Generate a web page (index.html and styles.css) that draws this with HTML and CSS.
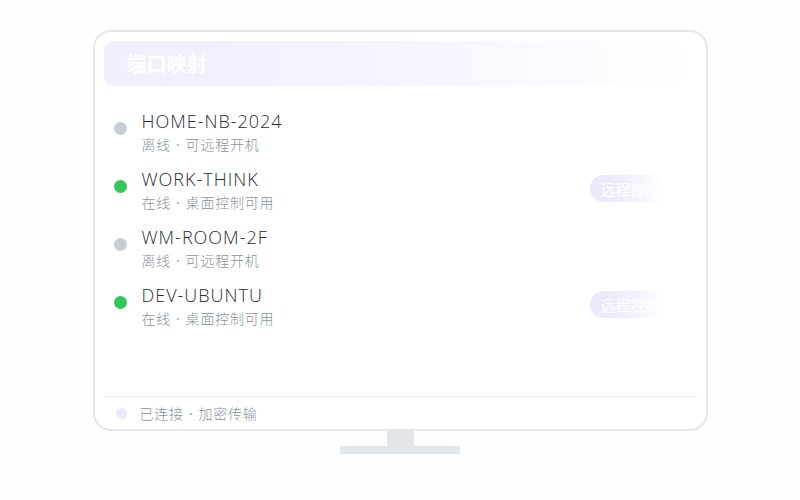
FILE: index.html
```html
<!DOCTYPE html>
<html lang="zh-CN">
<head>
<meta charset="utf-8">
<title>端口映射</title>
<link rel="stylesheet" href="styles.css">
</head>
<body>
<div class="stage">
  <div class="monitor">
    <div class="header"><span class="title">端口映射</span></div>
    <div class="list">
      <div class="row">
        <span class="dot off"></span>
        <div class="info">
          <div class="name">HOME-NB-2024</div>
          <div class="sub">离线<span class="sep">·</span>可远程开机</div>
        </div>
      </div>
      <div class="row">
        <span class="dot on"></span>
        <div class="info">
          <div class="name">WORK-THINK</div>
          <div class="sub">在线<span class="sep">·</span>桌面控制可用</div>
        </div>
        <span class="btn">远程控制</span>
      </div>
      <div class="row">
        <span class="dot off"></span>
        <div class="info">
          <div class="name">WM-ROOM-2F</div>
          <div class="sub">离线<span class="sep">·</span>可远程开机</div>
        </div>
      </div>
      <div class="row">
        <span class="dot on"></span>
        <div class="info">
          <div class="name">DEV-UBUNTU</div>
          <div class="sub">在线<span class="sep">·</span>桌面控制可用</div>
        </div>
        <span class="btn">远程控制</span>
      </div>
    </div>
    <div class="footer">
      <span class="fdot"></span>
      <span class="ftext">已连接<span class="sep">·</span>加密传输</span>
    </div>
  </div>
  <div class="neck"></div>
  <div class="base"></div>
</div>
</body>
</html>
```

FILE: styles.css
```css
html, body {
  margin: 0;
  padding: 0;
  background: #fefefe;
}
body {
  font-family: "Open Sans", "Noto Sans CJK SC", sans-serif;
  width: 800px;
  height: 500px;
  overflow: hidden;
}
.stage {
  display: flex;
  flex-direction: column;
  align-items: center;
  padding-top: 30px;
}
.monitor {
  box-sizing: border-box;
  width: 615px;
  height: 401px;
  border: 2px solid #e6e7eb;
  border-radius: 18px;
  background: #ffffff;
  padding: 9px 9px 0;
  display: flex;
  flex-direction: column;
}
.header {
  height: 45px;
  border-radius: 10px;
  background: linear-gradient(90deg, #f1eefe 0%, #f5f3fe 45%, #fbfaff 75%, #ffffff 100%);
  display: flex;
  align-items: center;
  padding-left: 23px;
}
.title {
  font-family: "Noto Sans CJK SC", sans-serif;
  font-weight: 700;
  font-size: 20px;
  color: #ffffff;
  line-height: 1;
}
.list {
  display: flex;
  flex-direction: column;
  gap: 14px;
  padding: 24px 27px 0 10px;
}
.row {
  display: flex;
  align-items: flex-start;
  height: 44px;
}
.dot {
  width: 13px;
  height: 13px;
  border-radius: 50%;
  margin-top: 12px;
  margin-right: 15px;
  flex: none;
}
.dot.off { background: #c9cdd3; }
.dot.on { background: #34c659; }
.info {
  flex: 1;
}
.name {
  font-size: 18px;
  font-weight: 300;
  letter-spacing: 1px;
  line-height: 22px;
  color: #262b33;
}
.sub {
  margin-top: 2px;
  font-family: "Noto Sans CJK SC", sans-serif;
  font-weight: 300;
  font-size: 14px;
  letter-spacing: 0.8px;
  line-height: 20px;
  color: #8c929b;
}
.sep {
  font-family: "Open Sans", sans-serif;
  font-weight: 400;
  padding: 0 5px;
}
.btn {
  margin-top: 7px;
  width: 80px;
  height: 27px;
  box-sizing: border-box;
  border-radius: 14px;
  padding-left: 11px;
  font-family: "Noto Sans CJK SC", sans-serif;
  font-weight: 400;
  font-size: 15px;
  line-height: 27px;
  color: #ffffff;
  white-space: nowrap;
  overflow: hidden;
  background: linear-gradient(90deg, #ece7fd 0%, #f0ecfe 40%, #f8f6ff 70%, #ffffff 92%);
}
.footer {
  margin-top: auto;
  border-top: 1px solid #eeeff2;
  height: 33px;
  box-sizing: border-box;
  padding: 6px 0 0 12px;
  display: flex;
  align-items: flex-start;
}
.fdot {
  width: 11px;
  height: 11px;
  border-radius: 50%;
  background: #edeafb;
  margin-top: 5px;
  margin-right: 13px;
}
.ftext {
  font-family: "Noto Sans CJK SC", sans-serif;
  font-weight: 300;
  font-size: 14px;
  letter-spacing: 0.8px;
  line-height: 20px;
  color: #8a9099;
}
.neck {
  width: 27px;
  height: 15px;
  background: #e2e5e9;
}
.base {
  width: 120px;
  height: 8px;
  background: #e2e5e9;
}
```
